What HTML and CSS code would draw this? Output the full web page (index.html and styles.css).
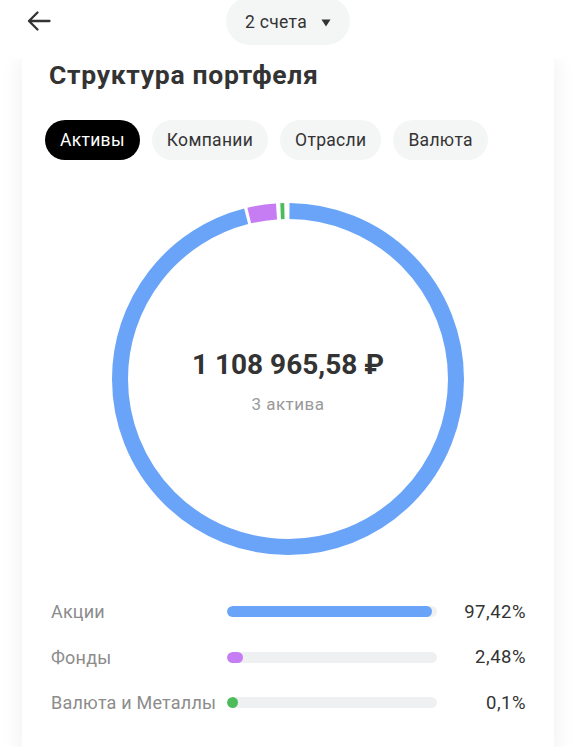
FILE: index.html
```html
<!DOCTYPE html>
<html lang="ru">
<head>
<meta charset="utf-8">
<link rel="stylesheet" href="styles.css">
</head>
<body>
<header class="topbar">
  <svg class="back" width="26" height="22" viewBox="0 0 26 22">
    <path d="M23.5 11H3M11.5 2.5L3 11l8.5 8.5" fill="none" stroke="#333" stroke-width="2.3" stroke-linecap="round" stroke-linejoin="round"/>
  </svg>
  <div class="accounts">
    <span>2 счета</span>
    <svg width="10" height="8" viewBox="0 0 10 8"><path d="M0.5 0.5h9L5 7.5z" fill="#333"/></svg>
  </div>
</header>
<main class="card">
  <h1 class="title">Структура портфеля</h1>
  <div class="chips">
    <span class="chip active">Активы</span>
    <span class="chip">Компании</span>
    <span class="chip">Отрасли</span>
    <span class="chip">Валюта</span>
  </div>
  <div class="donut">
    <svg width="352" height="352" viewBox="0 0 352 352">
      <g transform="rotate(-90 176 176)" fill="none" stroke-width="16">
        <circle cx="176" cy="176" r="168" stroke="#6aa4f8" stroke-dasharray="1011.3 1055.6" stroke-dashoffset="-1.5"/>
        <circle cx="176" cy="176" r="168" stroke="#c67cf3" stroke-dasharray="27.6 1055.6" stroke-dashoffset="-1016"/>
        <circle cx="176" cy="176" r="168" stroke="#4cbb5a" stroke-dasharray="3.8 1055.6" stroke-dashoffset="-1047.7"/>
      </g>
    </svg>
    <div class="donut-center">
      <div class="amount">1 108 965,58 ₽</div>
      <div class="count">3 актива</div>
    </div>
  </div>
  <div class="legend">
    <span class="label">Акции</span>
    <span class="track"><span class="fill blue" style="width:205px"></span></span>
    <span class="pct">97,42%</span>
    <span class="label">Фонды</span>
    <span class="track"><span class="fill purple" style="width:16px"></span></span>
    <span class="pct">2,48%</span>
    <span class="label">Валюта и Металлы</span>
    <span class="track"><span class="fill green" style="width:11px"></span></span>
    <span class="pct">0,1%</span>
  </div>
</main>
</body>
</html>
```
FILE: styles.css
```css
* { box-sizing: border-box; }
html, body { margin: 0; padding: 0; background: #fff; }
body {
  font-family: Roboto, "Noto Sans", Arial, sans-serif;
  color: #333;
  width: 576px;
  height: 747px;
  overflow: hidden;
}
.topbar {
  position: relative;
  z-index: 2;
  background: #fff;
  height: 58px;
  display: flex;
  align-items: flex-start;
}
.back {
  margin: 10px 0 0 26px;
}
.accounts {
  margin-left: 174px;
  margin-top: -3px;
  width: 124px;
  height: 48px;
  border-radius: 24px;
  background: #f4f5f5;
  display: flex;
  align-items: center;
  justify-content: center;
  gap: 14px;
  padding-top: 2px;
  font-size: 17.5px;
  letter-spacing: 0.3px;
  color: #333;
}
.accounts svg { margin-top: 1px; }
.card {
  position: relative;
  z-index: 1;
  margin: 0 22px;
  height: 700px;
  background: #fff;
  box-shadow: 0 0 22px rgba(0, 0, 0, 0.07);
  padding: 0 23px;
}
.title {
  margin: 0;
  padding: 2px 0 0 4px;
  font-size: 26.5px;
  letter-spacing: 0.7px;
  font-weight: 700;
  line-height: 30px;
  color: #333;
}
.chips {
  display: flex;
  gap: 12px;
  margin-top: 30px;
}
.chip {
  height: 40px;
  border-radius: 20px;
  background: #f4f5f5;
  padding: 0 15px;
  display: flex;
  align-items: center;
  font-size: 17.5px;
  letter-spacing: 0.3px;
  color: #333;
}
.chip.active { background: #000; color: #fff; }
.donut {
  position: relative;
  width: 352px;
  height: 352px;
  margin: 43px auto 0;
}
.donut svg { display: block; }
.donut-center {
  position: absolute;
  left: 0; right: 0; top: 144px;
  text-align: center;
}
.amount {
  font-size: 28px;
  font-weight: 700;
  color: #333;
  line-height: 36px;
}
.count {
  margin-top: 11px;
  font-size: 17px;
  letter-spacing: 0.5px;
  color: #999;
}
.legend {
  margin: 34px 5px 0 6px;
  display: grid;
  grid-template-columns: 176px 210px 1fr;
  grid-auto-rows: 45.5px;
  align-items: center;
  font-size: 18px;
}
.label { color: #8c8c8c; letter-spacing: 0.2px; }
.track {
  display: block;
  height: 11px;
  border-radius: 6px;
  background: #eff0f2;
  overflow: hidden;
}
.fill { display: block; height: 11px; border-radius: 6px; }
.fill.blue { background: #6aa4f8; }
.fill.purple { background: #c67cf3; }
.fill.green { background: #4cbb5a; }
.pct { text-align: right; color: #333; font-size: 18.5px; letter-spacing: 0.5px; }
```
